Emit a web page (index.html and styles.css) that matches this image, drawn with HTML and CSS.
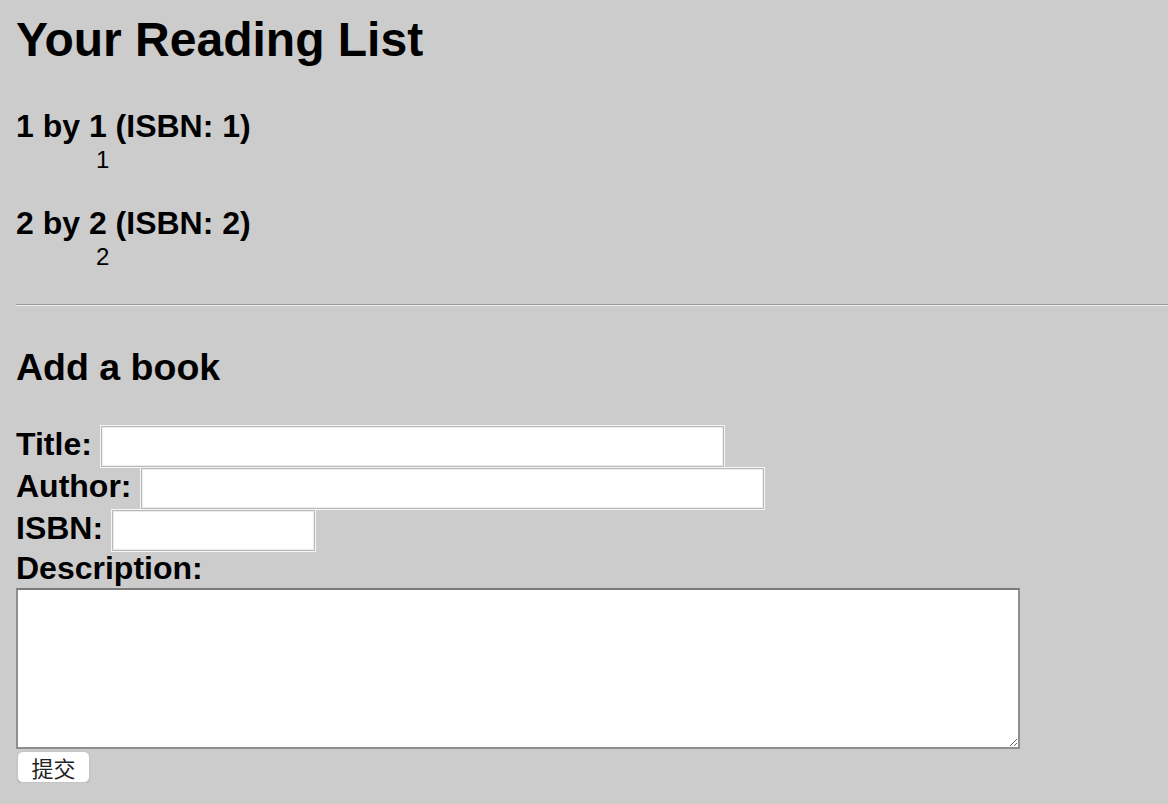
FILE: index.html
```html
<!DOCTYPE html>
<html>
<head>
<meta charset="utf-8">
<title>Your Reading List</title>
<link rel="stylesheet" href="styles.css">
</head>
<body>
<h1 class="page-title">Your Reading List</h1>
<dl class="books">
  <dt class="book-head">1 by 1 (ISBN: 1)</dt>
  <dd class="book-desc">1</dd>
  <dt class="book-head">2 by 2 (ISBN: 2)</dt>
  <dd class="book-desc">2</dd>
</dl>
<hr class="divider">
<h2 class="section-title">Add a book</h2>
<form class="book-form">
  <div class="row"><label class="lbl" for="title">Title:</label><input class="field field-wide" id="title" type="text"></div>
  <div class="row"><label class="lbl" for="author">Author:</label><input class="field field-wide" id="author" type="text"></div>
  <div class="row"><label class="lbl" for="isbn">ISBN:</label><input class="field field-short" id="isbn" type="text"></div>
  <label class="lbl lbl-block" for="desc">Description:</label>
  <textarea class="desc" id="desc"></textarea>
  <button class="submit" type="submit">提交</button>
</form>
</body>
</html>
```

FILE: styles.css
```css
html {
  background: #cccccc;
}
body {
  margin: 0;
  padding: 12px 0 0 16px;
  font-family: "Liberation Sans", Arial, "Noto Sans CJK SC", sans-serif;
  color: #000;
}
.page-title {
  margin: 0;
  font-size: 48px;
  line-height: 56px;
  font-weight: bold;
}
.books {
  margin: 40px 0 0;
}
.book-head {
  font-size: 32px;
  line-height: 36px;
  font-weight: bold;
}
.book-desc {
  margin: 3px 0 33px 80px;
  font-size: 24px;
  line-height: 25px;
}
.book-desc:last-child {
  margin-bottom: 0;
}
.divider {
  margin: 35px 0 0;
  height: 0;
  border: 0;
  border-top: 1px solid #9a9a9a;
  border-bottom: 1px solid #eeeeee;
}
.section-title {
  margin: 40px 0 0;
  font-size: 37.5px;
  line-height: 42px;
  font-weight: bold;
}
.book-form {
  margin-top: 38px;
}
.row {
  display: flex;
  align-items: flex-start;
  height: 42px;
}
.lbl {
  font-size: 32px;
  line-height: 37px;
  font-weight: bold;
  margin-right: 9px;
}
.lbl-block {
  display: block;
  line-height: 32px;
  margin: 0;
}
.field {
  box-sizing: border-box;
  height: 41px;
  margin: 0;
  border: 1px solid #b9b9b9;
  box-shadow: 0 0 0 1px #f6f6f6, inset 0 0 0 1px #ececec;
  background: #fff;
  font-size: 21px;
  padding: 2px 4px;
}
.field-wide {
  width: 623px;
}
.field-short {
  width: 203px;
}
.desc {
  display: block;
  box-sizing: border-box;
  width: 1004px;
  height: 161px;
  margin: 4px 0 0;
  border: 2px solid #8e8e8e;
  border-top-color: #7a7a7a;
  background: #fff;
  padding: 2px;
}
.submit {
  display: block;
  box-sizing: border-box;
  width: 73px;
  height: 32px;
  margin: 2px 0 0 1px;
  padding: 0;
  background: #fff;
  border: 1px solid #c4c4c4;
  border-radius: 6px;
  box-shadow: 0 1px 1px rgba(0,0,0,0.15);
  font-family: "Noto Sans CJK SC", sans-serif;
  font-size: 22px;
  color: #222;
  line-height: 28px;
}
```
